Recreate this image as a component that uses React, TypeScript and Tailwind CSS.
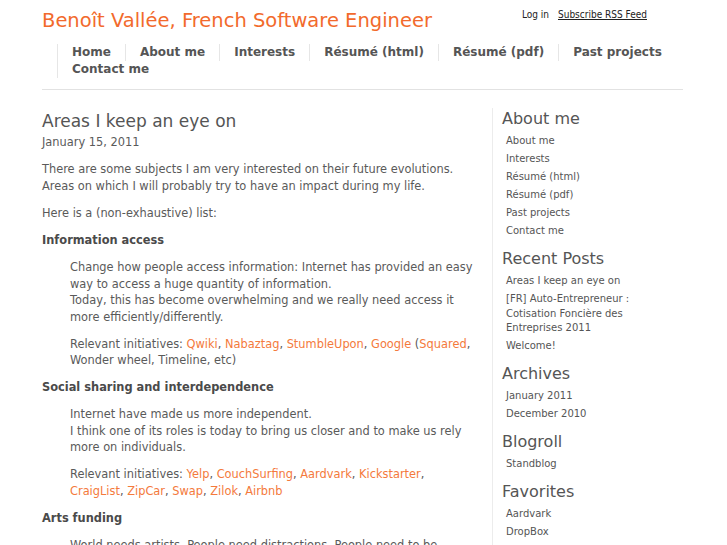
const nav = ["Home", "About me", "Interests", "Résumé (html)", "Résumé (pdf)", "Past projects", "Contact me"];

const sidebar: { title: string; items: string[] }[] = [
  { title: "About me", items: ["About me", "Interests", "Résumé (html)", "Résumé (pdf)", "Past projects", "Contact me"] },
  {
    title: "Recent Posts",
    items: ["Areas I keep an eye on", "[FR] Auto-Entrepreneur : Cotisation Foncière des Entreprises 2011", "Welcome!"],
  },
  { title: "Archives", items: ["January 2011", "December 2010"] },
  { title: "Blogroll", items: ["Standblog"] },
  { title: "Favorites", items: ["Aardvark", "DropBox", "Qwiki", "Skype"] },
];

function Links({ names }: { names: string[] }) {
  return (
    <>
      {names.map((n, i) => (
        <span key={n}>
          <a className="text-[#f47a3c]" href="#">
            {n}
          </a>
          {i < names.length - 1 ? ", " : ""}
        </span>
      ))}
    </>
  );
}

export default function App() {
  return (
    <div className="h-[545px] overflow-hidden bg-white font-['DejaVu_Sans',sans-serif] text-[#5a5a5a]">
      <div className="ml-[42px] w-[641px]">
        {/* Header */}
        <div className="flex items-start justify-between">
          <h1 className="pt-[8px] text-[19.5px] leading-[26px] text-[#f26a2c]">Benoît Vallée, French Software Engineer</h1>
          <div className="mr-[36px] flex gap-[9px] pt-[7px] font-['DejaVu_Sans_Condensed','DejaVu_Sans',sans-serif] text-[10px] text-[#222]">
            <a href="#">Log in</a>
            <a href="#" className="underline">
              Subscribe RSS Feed
            </a>
          </div>
        </div>

        <ul className="ml-[15px] mt-[10px] flex flex-wrap text-[12px] leading-[17px] font-bold text-[#555]">
          {nav.map((n) => (
            <li key={n} className="border-l border-[#e6e6e6] px-[14px]">
              {n}
            </li>
          ))}
        </ul>

        <div className="mt-[11px] border-b border-[#e2e2e2]" />

        <div className="mt-[18px] flex">
          {/* Post */}
          <div className="w-[436px] pt-[2px] text-[11.4px] leading-[16.5px]">
            <h2 className="text-[17px] leading-[22px] text-[#555]">Areas I keep an eye on</h2>
            <p className="mt-[2px]">January 15, 2011</p>
            <p className="mt-[10.5px]">
              There are some subjects I am very interested on their future evolutions.
              <br />
              Areas on which I will probably try to have an impact during my life.
            </p>
            <p className="mt-[10.5px]">Here is a (non-exhaustive) list:</p>

            <h3 className="mt-[10.5px] font-bold text-[#4a4a4a]">Information access</h3>
            <div className="mt-[11px] pl-[28px]">
              <p>
                Change how people access information: Internet has provided an easy way to access a huge quantity of
                information.
                <br />
                Today, this has become overwhelming and we really need access it more efficiently/differently.
              </p>
              <p className="mt-[10.5px]">
                Relevant initiatives: <Links names={["Qwiki", "Nabaztag", "StumbleUpon"]} />,{" "}
                <a className="text-[#f47a3c]" href="#">
                  Google
                </a>{" "}
                (
                <a className="text-[#f47a3c]" href="#">
                  Squared
                </a>
                , Wonder wheel, Timeline, etc)
              </p>
            </div>

            <h3 className="mt-[10.5px] font-bold text-[#4a4a4a]">Social sharing and interdependence</h3>
            <div className="mt-[10.5px] pl-[28px]">
              <p>
                Internet have made us more independent.
                <br />I think one of its roles is today to bring us closer and to make us rely more on individuals.
              </p>
              <p className="mt-[10.5px]">
                Relevant initiatives: <Links names={["Yelp", "CouchSurfing", "Aardvark", "Kickstarter"]} />,
                <br />
                <Links names={["CraigList", "ZipCar", "Swap", "Zilok", "Airbnb"]} />
              </p>
            </div>

            <h3 className="mt-[10.5px] font-bold text-[#4a4a4a]">Arts funding</h3>
            <div className="mt-[10.5px] pl-[28px]">
              <p>World needs artists. People need distractions. People need to be entertained.</p>
            </div>
          </div>

          {/* Sidebar */}
          <div className="ml-[14px] flex-1 border-l border-[#ececec] pl-[9px] pt-[1px]">
            {sidebar.map((s) => (
              <div key={s.title} className="mb-[10.5px]">
                <h2 className="text-[16px] leading-[20px] text-[#555]">{s.title}</h2>
                <ul className="mt-[5px] text-[10px] leading-[14.5px] text-[#555]">
                  {s.items.map((it) => (
                    <li key={it} className="mb-[3.5px] w-[135px] pl-[4px]">
                      {it}
                    </li>
                  ))}
                </ul>
              </div>
            ))}
          </div>
        </div>
      </div>
    </div>
  );
}
